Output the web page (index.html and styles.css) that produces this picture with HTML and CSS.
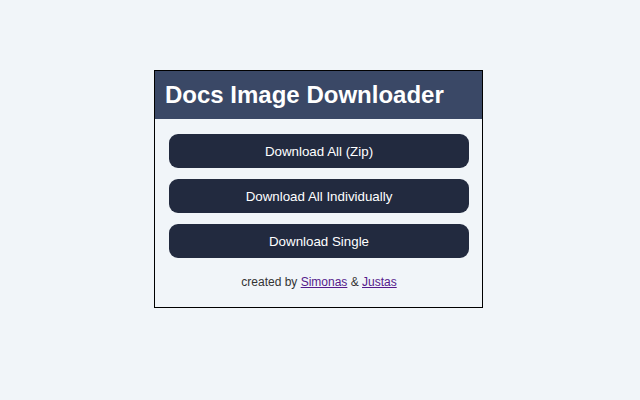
FILE: index.html
```html
<!DOCTYPE html>
<html>
<head>
<meta charset="utf-8">
<link rel="stylesheet" href="styles.css">
</head>
<body>
<div class="page">
  <div class="card">
    <div class="header"><h1 class="title">Docs Image Downloader</h1></div>
    <div class="body">
      <button class="btn">Download All (Zip)</button>
      <button class="btn">Download All Individually</button>
      <button class="btn">Download Single</button>
      <p class="credit">created by <a class="link" href="#">Simonas</a> &amp; <a class="link" href="#">Justas</a></p>
    </div>
  </div>
</div>
</body>
</html>
```
FILE: styles.css
```css
html, body {
  margin: 0;
  padding: 0;
  background: #f1f5f9;
  font-family: "Liberation Sans", Arial, sans-serif;
}
.page {
  width: 640px;
  height: 400px;
  display: flex;
  justify-content: center;
  align-items: flex-start;
  padding-top: 70px;
  padding-right: 3px;
  box-sizing: border-box;
}
.card {
  width: 329px;
  border: 1px solid #000;
  background: #f1f5f9;
  box-sizing: border-box;
}
.header {
  background: #3a4866;
  height: 48px;
  display: flex;
  align-items: center;
  padding-left: 10px;
}
.title {
  margin: 0;
  color: #fff;
  font-size: 24px;
  font-weight: bold;
}
.body {
  padding: 15px 13px 0 14px;
  display: flex;
  flex-direction: column;
  gap: 11px;
}
.btn {
  width: 300px;
  height: 34px;
  border: none;
  border-radius: 9px;
  background: #222a3f;
  color: #fff;
  font-family: "Liberation Sans", Arial, sans-serif;
  font-size: 13.333px;
  padding: 0;
}
.credit {
  margin: 6px 0 18px;
  text-align: center;
  font-size: 12px;
  color: #333;
}
.link {
  color: #551a8b;
}
```
